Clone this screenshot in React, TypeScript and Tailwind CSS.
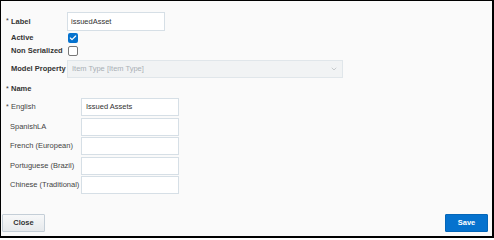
import { Check, ChevronDown } from "lucide-react";

const NAMES = [
  { lang: "English", value: "Issued Assets", req: true },
  { lang: "SpanishLA", value: "", req: false },
  { lang: "French (European)", value: "", req: false },
  { lang: "Portuguese (Brazil)", value: "", req: false },
  { lang: "Chinese (Traditional)", value: "", req: false },
];

function Req() {
  return (
    <span className="inline-block w-[5px] text-[7px] leading-none font-normal relative -top-[1px]">
      *
    </span>
  );
}

function CheckBox({ checked }: { checked: boolean }) {
  return checked ? (
    <span className="w-[10px] h-[10px] rounded-[2px] bg-[#0572ce] flex items-center justify-center">
      <Check size={8} strokeWidth={3.5} color="#fff" />
    </span>
  ) : (
    <span className="w-[10px] h-[10px] rounded-[2px] border border-[#777] bg-white" />
  );
}

export default function App() {
  return (
    <div
      className="w-[494px] h-[238px] flex flex-col bg-[#fafafa] border-l border-t border-r-2 border-b-2 border-black text-[7.5px] text-[#333]"
      style={{ fontFamily: '"Liberation Sans", Arial, sans-serif' }}
    >
      <div className="flex-1 flex flex-col pl-[5px] pt-[11px]">
        {/* Label */}
        <div className="flex items-center h-[19px]">
          <div className="w-[61px] flex items-center font-bold">
            <Req />
            Label
          </div>
          <div className="w-[98px] h-[19px] bg-white border border-[#d6dfe6] flex items-center px-[3px]">
            issuedAsset
          </div>
        </div>

        {/* Active */}
        <div className="flex items-center h-[12px] mt-[1px]">
          <div className="w-[62px] pl-[5px] font-bold">Active</div>
          <CheckBox checked />
        </div>

        {/* Non Serialized */}
        <div className="flex items-center h-[12px] mt-[1px]">
          <div className="w-[62px] pl-[5px] font-bold">Non Serialized</div>
          <CheckBox checked={false} />
        </div>

        {/* Model Property */}
        <div className="flex items-center h-[18px] mt-[3px]">
          <div className="w-[61px] pl-[5px] font-bold">Model Property</div>
          <div className="w-[276px] h-[18px] bg-[#f1f3f4] border border-[#e0e6ea] flex items-center justify-between px-[4px] text-[#aab0b5]">
            <span>Item Type [Item Type]</span>
            <ChevronDown size={8} strokeWidth={1.5} color="#9aa0a5" />
          </div>
        </div>

        {/* Name */}
        <div className="flex items-center h-[12px] mt-[5px] font-bold">
          <Req />
          Name
        </div>

        <div className="flex flex-col gap-[1.5px] mt-[3px] text-[#444]">
          {NAMES.map((n) => (
            <div key={n.lang} className="flex items-center h-[18px]">
              <div className="w-[75px] flex items-center">
                {n.req ? <Req /> : <span className="inline-block w-[4px]" />}
                {n.lang}
              </div>
              <div className="w-[98px] h-[18px] bg-white border border-[#d6dfe6] flex items-center px-[4px] text-[#333]">
                {n.value}
              </div>
            </div>
          ))}
        </div>
      </div>

      {/* Footer */}
      <div className="flex justify-between items-center pl-[1px] pr-[4px] pb-[4px]">
        <button
          type="button"
          className="w-[43px] h-[18px] border border-[#c4ced7] bg-gradient-to-b from-[#f7f8f9] to-[#e6e9ec] font-bold text-[#333] text-[7.5px] rounded-[1px]"
        >
          Close
        </button>
        <button
          type="button"
          className="w-[43px] h-[18px] border border-[#0466b8] bg-[#0572ce] font-bold text-white text-[7.5px] rounded-[1px]"
        >
          Save
        </button>
      </div>
    </div>
  );
}
